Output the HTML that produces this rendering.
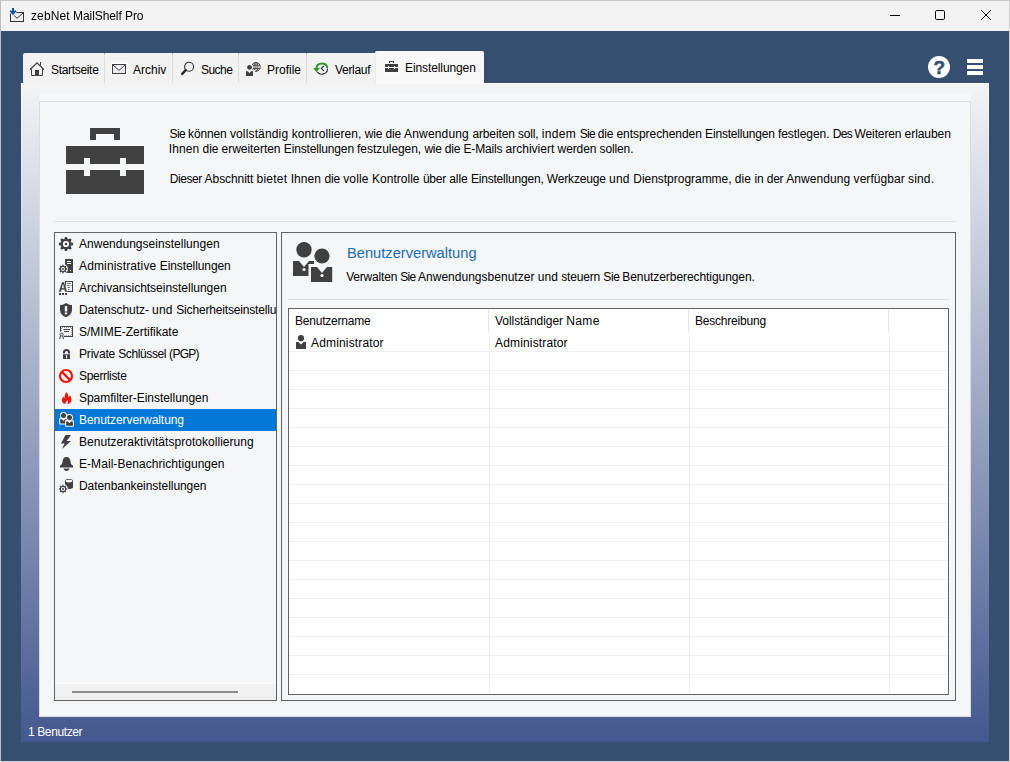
<!DOCTYPE html>
<html lang="de">
<head>
<meta charset="utf-8">
<title>zebNet MailShelf Pro</title>
<style>
html,body{margin:0;padding:0;}
body{width:1010px;height:762px;overflow:hidden;background:#364e70;font-family:"Liberation Sans",sans-serif;font-size:12px;color:#000;position:relative;}
.abs{position:absolute;}
.t{position:absolute;white-space:nowrap;line-height:14px;font-size:12px;}
#win{position:absolute;left:0;top:0;width:1008px;height:760px;border:1px solid #cfcfcf;border-left-color:#bdbdbd;border-top-color:#c4c4c4;background:#364e70;}
#titlebar{position:absolute;left:1px;top:1px;width:1008px;height:30px;background:#f3f3f3;}
#outer{position:absolute;left:21px;top:83px;width:968px;height:659px;background:linear-gradient(to bottom,#f3f4f6 0%,#44588f 100%);}
#outerbl{position:absolute;left:21px;top:83px;width:1px;height:659px;background:linear-gradient(to bottom,#ffffff 0%,#44588f 100%);}
#outerbr{position:absolute;left:988px;top:83px;width:1px;height:659px;background:linear-gradient(to bottom,#ffffff 0%,#44588f 100%);}
#outerbt{position:absolute;left:21px;top:83px;width:968px;height:1px;background:#ffffff;}
#inner{position:absolute;left:39px;top:93px;width:932px;height:624px;background:#f5f6f8;}
#box{position:absolute;left:39px;top:101px;width:930px;height:614px;border:1px solid #dcdcdc;background:#f5f6f8;}
.tab{position:absolute;top:53px;height:31px;background:#f2f2f2;}
.tabsep{position:absolute;top:53px;width:1px;height:30px;background:linear-gradient(to bottom,#8f9aae 0,#8f9aae 1px,#dedede 1px,#dedede 100%);}
#tabact{position:absolute;left:375px;top:51px;width:109px;height:33px;background:#f9f9f9;border-radius:2px 2px 0 0;box-shadow:inset 1px 0 0 #ebebeb;}
.w{position:absolute;top:0;white-space:pre;letter-spacing:-0.06px;}
.hl{position:absolute;height:1px;background:#e2e2e2;}
#list{position:absolute;left:54px;top:232px;width:221px;height:467px;border:1px solid #646464;background:#f5f6f8;overflow:hidden;}
.row{position:absolute;left:0;width:221px;height:22px;}
.row .lbl{position:absolute;left:24px;top:4px;line-height:14px;white-space:nowrap;}
.row svg{position:absolute;left:3px;top:3px;}
.sel{background:#0078d7;color:#fff;}
#detail{position:absolute;left:281px;top:232px;width:673px;height:467px;border:1px solid #646464;background:#f5f6f8;}
#table{position:absolute;left:288px;top:308px;width:659px;height:385px;border:1px solid #646464;background:#fff;overflow:hidden;}
.gl{position:absolute;left:0;width:659px;height:1px;background:#f0f0f0;}
.gv{position:absolute;top:24px;width:1px;height:361px;background:#f0f0f0;}
.hv{position:absolute;top:0;width:1px;height:24px;background:#e5e5e5;}
</style>
</head>
<body>
<div id="win"></div>
<div id="titlebar"></div>
<!-- title icon -->
<svg class="abs" style="left:9px;top:7px" width="17" height="16" viewBox="0 0 17 16">
<rect x="1.5" y="5.5" width="13" height="9" fill="#efeff3" stroke="#333" stroke-width="1"/>
<path d="M3.5 7 L8 11.3 L14.2 5.8" fill="none" stroke="#333" stroke-width="1"/>
<path d="M3 1 H5 V4.2 L6.2 3.1 L7.3 4.3 L4 8.2 L0.7 4.3 L1.8 3.1 L3 4.2 Z" fill="#0054a6" stroke="#f3f3f3" stroke-width="1.6" stroke-linejoin="round"/>
<path d="M3 1 H5 V4.2 L6.2 3.1 L7.3 4.3 L4 8.2 L0.7 4.3 L1.8 3.1 L3 4.2 Z" fill="#0054a6"/>
</svg>
<div class="t" id="ttl" style="left:30.6px;top:9px;will-change:transform;"><span style="letter-spacing:0.106px">zebNet </span><span style="letter-spacing:-0.089px">MailShelf </span><span style="letter-spacing:-0.037px">Pro</span></div>
<!-- window controls -->
<svg class="abs" style="left:880px;top:5px" width="120" height="20" viewBox="0 0 120 20">
<path d="M10 10.5 H20" stroke="#000" stroke-width="1" fill="none"/>
<rect x="55.5" y="5.5" width="9" height="9" rx="1.2" fill="none" stroke="#000" stroke-width="1"/>
<path d="M101 5 L111 15 M111 5 L101 15" stroke="#000" stroke-width="1" fill="none"/>
</svg>

<!-- outer gradient panel -->
<div id="outer"></div><div id="outerbt"></div><div id="outerbl"></div><div id="outerbr"></div>
<!-- tabs -->
<div class="tab" style="left:23px;width:352px;border-radius:2px 0 0 0;"></div>
<div class="tabsep" style="left:104px"></div>
<div class="tabsep" style="left:172px"></div>
<div class="tabsep" style="left:238px"></div>
<div class="tabsep" style="left:306px"></div>
<div id="tabact"></div>

<!-- tab icons -->
<svg class="abs" style="left:29px;top:61px" width="16" height="16" viewBox="0 0 16 16">
<path d="M8 1.2 L0.6 8.4 H2 V15.5 H14 V8.4 H15.4 Z M11 0.6 H12.6 V5 H11 Z" fill="#fff" stroke="#fff" stroke-width="1.6" stroke-linejoin="round"/>
<path d="M2.5 8 V14.5 H13.5 V8 L8 2.6 Z" fill="#f5f5f8"/>
<path d="M1.4 8.3 L8 1.8 L14.6 8.3" fill="none" stroke="#404040" stroke-width="1.3" stroke-linecap="round" stroke-linejoin="miter"/>
<path d="M2.5 8 V14.5 H13.5 V8" fill="none" stroke="#404040" stroke-width="1"/>
<rect x="6" y="9" width="4" height="6" fill="#404040"/>
<rect x="11" y="1" width="1.1" height="3.6" fill="#404040"/>
</svg>
<svg class="abs" style="left:111px;top:62px" width="17" height="13" viewBox="0 0 17 13">
<rect x="0.5" y="1.5" width="15" height="10" fill="#fff" stroke="#fff" stroke-width="2"/>
<rect x="1.5" y="2.5" width="13" height="9" fill="#eeeef2" stroke="#404040" stroke-width="1"/>
<path d="M2 3 L8 8.4 L14 3" fill="none" stroke="#404040" stroke-width="1"/>
</svg>
<svg class="abs" style="left:180px;top:61px" width="16" height="16" viewBox="0 0 16 16">
<circle cx="9.1" cy="5.7" r="4.5" fill="#efeff2" stroke="#2e2e2e" stroke-width="1.1"/>
<path d="M5.7 9.1 L2.2 12.8" stroke="#2a2a2a" stroke-width="2.5" stroke-linecap="round"/>
</svg>
<svg class="abs" style="left:245px;top:61px" width="16" height="16" viewBox="0 0 16 16">
<g fill="none" stroke="#404040" stroke-width="0.9"><circle cx="10.9" cy="5.9" r="4.4"/><ellipse cx="10.9" cy="5.9" rx="2" ry="4.4"/><path d="M10.9 1.5 V10.3 M6.8 4.3 H15 M6.8 7.6 H15"/></g>
<circle cx="4.5" cy="6.3" r="3.5" fill="#f2f2f2"/><path d="M0 9.2 H9.2 V16 H0 Z" fill="#f2f2f2"/>
<path d="M8.6 9.4 L11.6 8.2 L9.4 11.2 Z" fill="#f2f2f2"/>
<circle cx="4.5" cy="6.3" r="2.4" fill="#404040"/>
<path d="M1 10.2 H3 L4.5 12.2 L6 10.2 H8 V15 H1 Z" fill="#404040"/>
</svg>
<svg class="abs" style="left:312px;top:61px" width="17" height="16" viewBox="0 0 17 16">
<circle cx="9.8" cy="7.4" r="6.9" fill="#fff"/>
<path d="M0.4 6.6 H8.6 L4.3 12 Z" fill="#fff"/>
<circle cx="9.8" cy="7.4" r="5.3" fill="#f0f0f3"/>
<path d="M15.6 7.4 A5.8 5.8 0 0 1 5.2 10.9" fill="none" stroke="#333" stroke-width="1.2"/>
<path d="M15.5 7.0 A5.7 5.7 0 0 0 4.3 7.4" fill="none" stroke="#2c982c" stroke-width="2"/>
<path d="M1.1 7.1 H7.9 L4.3 11.3 Z" fill="#2c982c"/>
<path d="M11.6 5.2 L9.3 7.4 L11.6 9.6" fill="none" stroke="#2a2a2a" stroke-width="1.1" stroke-linecap="round" stroke-linejoin="round"/>
</svg>
<svg class="abs" style="left:384px;top:60px" width="16" height="14" viewBox="0 0 16 14">
<path d="M5 0.5 H10.5 V3.5 H14.6 V12.6 H0.4 V3.5 H5 Z" fill="#fff"/>
<path d="M5 1 H10 V3 H9 V2 H6 V3 H5 Z" fill="#404040"/>
<path d="M1 4 H14 V7 H11 V6 H10 V7 H5 V6 H4 V7 H1 Z" fill="#404040"/>
<path d="M1 8 H4 V9 H5 V8 H10 V9 H11 V8 H14 V12 H1 Z" fill="#404040"/>
</svg>
<div class="t" style="left:51px;top:63px;letter-spacing:-0.32px;">Startseite</div>
<div class="t" style="left:133px;top:63px;letter-spacing:0px;">Archiv</div>
<div class="t" style="left:201px;top:63px;letter-spacing:-0.55px;">Suche</div>
<div class="t" style="left:267px;top:63px;letter-spacing:0px;">Profile</div>
<div class="t" style="left:335px;top:63px;letter-spacing:-0.3px;">Verlauf</div>
<div class="t" style="left:405px;top:61px;letter-spacing:-0.1px;">Einstellungen</div>

<!-- help + menu -->
<svg class="abs" style="left:927px;top:55px" width="24" height="24" viewBox="0 0 24 24">
<circle cx="12" cy="12" r="11" fill="#fff"/>
<text x="12.2" y="19.2" text-anchor="middle" style="font-family:'Liberation Sans',sans-serif;font-weight:700;font-size:19px;" fill="#364e70" stroke="#364e70" stroke-width="0.5">?</text>
</svg>
<div class="abs" style="left:967px;top:59px;width:16px;height:4px;background:#fff"></div>
<div class="abs" style="left:967px;top:65px;width:16px;height:4px;background:#fff"></div>
<div class="abs" style="left:967px;top:71px;width:16px;height:4px;background:#fff"></div>

<!-- inner panel -->
<div id="inner"></div>
<div id="box"></div>

<!-- big briefcase -->
<svg class="abs" style="left:66px;top:128px" width="78" height="66" viewBox="0 0 78 66">
<path d="M24 0 H54 V12 H48 V6 H30 V12 H24 Z" fill="#404040"/>
<path d="M0 18 H78 V36 H60 V30 H54 V36 H24 V30 H18 V36 H0 Z" fill="#404040"/>
<path d="M0 42 H18 V48 H24 V42 H54 V48 H60 V42 H78 V66 H0 Z" fill="#404040"/>
</svg>
<div class="t ln" style="left:0;top:127px;width:1010px;height:14px;"><span class="w" style="left:169.50px;letter-spacing:-0.544px">Sie </span><span class="w" style="left:188.00px;letter-spacing:-0.115px">können </span><span class="w" style="left:229.90px;letter-spacing:0.147px">vollständig </span><span class="w" style="left:291.70px;letter-spacing:0.071px">kontrollieren, </span><span class="w" style="left:364.80px;letter-spacing:-0.135px">wie </span><span class="w" style="left:385.60px;letter-spacing:-0.212px">die </span><span class="w" style="left:404.10px;letter-spacing:0.158px">Anwendung </span><span class="w" style="left:472.40px;letter-spacing:-0.122px">arbeiten </span><span class="w" style="left:518.00px;letter-spacing:-0.162px">soll, </span><span class="w" style="left:541.70px;letter-spacing:0.330px">indem </span><span class="w" style="left:579.70px;letter-spacing:-0.669px">Sie </span><span class="w" style="left:597.70px;letter-spacing:-0.137px">die </span><span class="w" style="left:616.50px;letter-spacing:-0.053px">entsprechenden </span><span class="w" style="left:705.10px;letter-spacing:-0.185px">Einstellungen </span><span class="w" style="left:777.90px;letter-spacing:-0.043px">festlegen. </span><span class="w" style="left:832.80px;letter-spacing:-0.718px">Des </span><span class="w" style="left:854.60px;letter-spacing:-0.126px">Weiteren </span><span class="w" style="left:904.60px;letter-spacing:-0.058px">erlauben</span></div>
<div class="t ln" style="left:0;top:142px;width:1010px;height:14px;"><span class="w" style="left:168.80px;letter-spacing:0.073px">Ihnen </span><span class="w" style="left:202.60px;letter-spacing:-0.087px">die </span><span class="w" style="left:221.60px;letter-spacing:-0.041px">erweiterten </span><span class="w" style="left:283.80px;letter-spacing:-0.149px">Einstellungen </span><span class="w" style="left:357.10px;letter-spacing:-0.057px">festzulegen, </span><span class="w" style="left:424.40px;letter-spacing:-0.260px">wie </span><span class="w" style="left:444.70px;letter-spacing:-0.137px">die </span><span class="w" style="left:463.50px;letter-spacing:-0.154px">E-Mails </span><span class="w" style="left:505.60px;letter-spacing:-0.001px">archiviert </span><span class="w" style="left:557.60px;letter-spacing:-0.113px">werden </span><span class="w" style="left:599.50px;letter-spacing:-0.115px">sollen.</span></div>
<div class="t ln" style="left:0;top:172px;width:1010px;height:14px;"><span class="w" style="left:169.80px;letter-spacing:-0.459px">Dieser </span><span class="w" style="left:204.60px;letter-spacing:-0.069px">Abschnitt </span><span class="w" style="left:256.60px;letter-spacing:0.202px">bietet </span><span class="w" style="left:290.70px;letter-spacing:0.056px">Ihnen </span><span class="w" style="left:324.40px;letter-spacing:-0.137px">die </span><span class="w" style="left:343.20px;letter-spacing:0.148px">volle </span><span class="w" style="left:372.10px;letter-spacing:0.010px">Kontrolle </span><span class="w" style="left:422.90px;letter-spacing:-0.210px">über </span><span class="w" style="left:449.20px;letter-spacing:-0.063px">alle </span><span class="w" style="left:470.90px;letter-spacing:-0.195px">Einstellungen, </span><span class="w" style="left:546.70px;letter-spacing:-0.141px">Werkzeuge </span><span class="w" style="left:609.10px;letter-spacing:0.211px">und </span><span class="w" style="left:633.30px;letter-spacing:-0.031px">Dienstprogramme, </span><span class="w" style="left:734.80px;letter-spacing:0.113px">die </span><span class="w" style="left:754.60px;letter-spacing:-0.158px">in </span><span class="w" style="left:766.80px;letter-spacing:-0.294px">der </span><span class="w" style="left:786.30px;letter-spacing:0.058px">Anwendung </span><span class="w" style="left:853.60px;letter-spacing:0.047px">verfügbar </span><span class="w" style="left:908.10px;letter-spacing:0.138px">sind.</span></div>
<div class="hl" style="left:54px;top:221px;width:902px;"></div>

<!-- list -->
<div id="list">
<div class="row" style="top:0px"><svg width="16" height="16" viewBox="0 0 16 16"><path d="M6.69 2.55 L6.87 0.89 L9.13 0.89 L9.31 2.55 L10.93 3.23 L12.23 2.18 L13.82 3.77 L12.77 5.07 L13.45 6.69 L15.11 6.87 L15.11 9.13 L13.45 9.31 L12.77 10.93 L13.82 12.23 L12.23 13.82 L10.93 12.77 L9.31 13.45 L9.13 15.11 L6.87 15.11 L6.69 13.45 L5.07 12.77 L3.77 13.82 L2.18 12.23 L3.23 10.93 L2.55 9.31 L0.89 9.13 L0.89 6.87 L2.55 6.69 L3.23 5.07 L2.18 3.77 L3.77 2.18 L5.07 3.23 Z" fill="#404040"/><circle cx="8" cy="8" r="3.1" fill="#fff"/><circle cx="8" cy="8" r="1.3" fill="#404040"/></svg><span class="lbl" style="letter-spacing:0.02px;">Anwendungseinstellungen</span></div>
<div class="row" style="top:22px"><svg width="16" height="16" viewBox="0 0 16 16"><rect x="7" y="1" width="8" height="14" fill="#404040"/><rect x="9" y="3" width="4" height="1" fill="#fff"/><rect x="9" y="5" width="4" height="1" fill="#fff"/><rect x="12" y="12" width="1" height="1" fill="#fff"/><circle cx="5" cy="11" r="5" fill="#f5f6f8"/><path d="M4.25 7.89 L4.33 6.75 L5.67 6.75 L5.75 7.89 L6.67 8.27 L7.53 7.52 L8.48 8.47 L7.73 9.33 L8.11 10.25 L9.25 10.33 L9.25 11.67 L8.11 11.75 L7.73 12.67 L8.48 13.53 L7.53 14.48 L6.67 13.73 L5.75 14.11 L5.67 15.25 L4.33 15.25 L4.25 14.11 L3.33 13.73 L2.47 14.48 L1.52 13.53 L2.27 12.67 L1.89 11.75 L0.75 11.67 L0.75 10.33 L1.89 10.25 L2.27 9.33 L1.52 8.47 L2.47 7.52 L3.33 8.27 Z" fill="#404040"/><circle cx="5" cy="11" r="1.9" fill="#fff"/><circle cx="5" cy="11" r="0.9" fill="#404040"/></svg><span class="lbl"><span style="letter-spacing:0.141px">Administrative </span><span style="letter-spacing:-0.096px">Einstellungen</span></span></div>
<div class="row" style="top:44px"><svg width="16" height="16" viewBox="0 0 16 16"><rect x="7.5" y="1.5" width="7" height="10" fill="#f5f6f8" stroke="#404040" stroke-width="1"/><path d="M9 3.5 H13 M9 5.5 H11.6 M12.6 5.5 H13.6 M9.5 7.5 H12 M10 9.5 H11.6" stroke="#5a5a5a" stroke-width="0.8" fill="none"/><path d="M0.6 12 L3.9 2 H6.1 L9.4 12 H7 L6.4 9.8 H3.6 L3 12 Z M4.1 8 H5.9 L5 4.6 Z" fill="#404040" stroke="#f5f6f8" stroke-width="0.4" fill-rule="evenodd"/><path d="M1 13 h2 v2 h-2 z M4 13 h2 v2 h-2 z M7 13 h2 v2 h-2 z" fill="#404040"/></svg><span class="lbl" style="letter-spacing:-0.02px;">Archivansichtseinstellungen</span></div>
<div class="row" style="top:66px"><svg width="16" height="16" viewBox="0 0 16 16"><path d="M8 0.9 C6.3 2.2 4.3 2.9 2 3 V7.4 C2 11.2 4.6 13.9 8 15.1 C11.4 13.9 14 11.2 14 7.4 V3 C11.7 2.9 9.7 2.2 8 0.9 Z" fill="#404040"/><rect x="6.8" y="4.1" width="2.4" height="5.4" fill="#fff"/><rect x="6.8" y="10.4" width="2.4" height="2" fill="#fff"/></svg><span class="lbl"><span style="letter-spacing:-0.072px">Datenschutz- </span><span style="letter-spacing:0.186px">und </span><span style="letter-spacing:-0.169px">Sicherheitseinstellungen</span></span></div>
<div class="row" style="top:88px"><svg width="16" height="16" viewBox="0 0 16 16"><rect x="2" y="2" width="13" height="11" fill="#404040"/><rect x="3.5" y="3.5" width="10" height="8" fill="#f5f6f8"/><path d="M3 3.5 H14 M3 11.5 H14" stroke="#f5f6f8" stroke-width="1" stroke-dasharray="1 1" fill="none"/><path d="M3.5 3 V12 M13.5 3 V12" stroke="#f5f6f8" stroke-width="1" stroke-dasharray="1 1" fill="none"/><path d="M5.5 5.5 H12 M6 7.5 H11" stroke="#404040" stroke-width="1" fill="none"/><circle cx="3.6" cy="10.6" r="3" fill="#f5f6f8"/><circle cx="3.6" cy="10.4" r="2" fill="#6e6e6e"/><circle cx="3.6" cy="10.4" r="0.9" fill="#e0e0e0"/><path d="M2.6 12 L1.6 15 M4.6 12 L5.6 15" stroke="#555" stroke-width="1.1" fill="none"/></svg><span class="lbl" style="letter-spacing:0px;">S/MIME-Zertifikate</span></div>
<div class="row" style="top:110px"><svg width="16" height="16" viewBox="0 0 16 16"><path d="M6 7.5 V6.6 A2.5 2.6 0 0 1 11 6.6 V7.5" stroke="#404040" stroke-width="2" fill="none"/><rect x="5" y="8.3" width="7" height="4.7" fill="#404040"/><rect x="8" y="9.2" width="1.1" height="3" fill="#fff"/></svg><span class="lbl"><span style="letter-spacing:-0.185px">Private </span><span style="letter-spacing:-0.379px">Schlüssel </span><span style="letter-spacing:-0.708px">(PGP)</span></span></div>
<div class="row" style="top:132px"><svg width="16" height="16" viewBox="0 0 16 16"><circle cx="8" cy="8" r="6" fill="none" stroke="#e8190a" stroke-width="2.2"/><path d="M3.9 3.9 L12.1 12.1" stroke="#e8190a" stroke-width="2.2"/></svg><span class="lbl" style="letter-spacing:-0.32px;">Sperrliste</span></div>
<div class="row" style="top:154px"><svg width="16" height="16" viewBox="0 0 16 16"><path d="M8.3 1.9 C9.9 3.6 10.5 5.4 10.2 7.3 C11 6.9 11.7 6.2 12 5.3 C13.5 7.4 13.9 10 12.9 12 C12.1 13.4 10.7 14.1 9.2 14.1 C10.4 12.8 10.4 11.2 9.4 10 C9 11.4 8.2 12 7.6 12.6 C7.2 13.1 7.2 13.7 7.5 14.1 C5.6 14 4.3 12.8 4 11 C3.8 9.4 4.5 7.8 5.2 6.3 C5.6 7.2 6 7.8 6.6 8.2 C6.4 6 7 3.8 8.3 1.9 Z" fill="#e8190a"/></svg><span class="lbl" style="letter-spacing:-0.03px;">Spamfilter-Einstellungen</span></div>
<div class="row sel" style="top:176px"><svg width="17" height="16" viewBox="0 0 17 16"><g fill="#fff" stroke="#fff" stroke-width="2" stroke-linejoin="miter"><circle cx="5.5" cy="3.5" r="2.5"/><path d="M2.2 7.3 H8.7 V8 H7 V11.6 H2.2 Z"/><circle cx="11.5" cy="5.6" r="2.5"/><rect x="8.2" y="9.4" width="6.7" height="4.3"/></g><circle cx="5.5" cy="3.5" r="2.5" fill="#404040"/><path d="M2.2 7.3 H4 L5.5 9 L7 7.3 H8.7 V8.2 H7.2 V11.6 H2.2 Z" fill="#404040"/><circle cx="11.5" cy="5.6" r="2.5" fill="#404040"/><path d="M8.2 9.4 H10 L11.5 11.2 L13 9.4 H14.9 V13.7 H8.2 Z" fill="#404040"/></svg><span class="lbl" style="letter-spacing:-0.06px;">Benutzerverwaltung</span></div>
<div class="row" style="top:198px"><svg width="16" height="16" viewBox="0 0 16 16"><path d="M7.5 1 H13 L8.6 7 H13 L4 15 L6.6 9.5 H3 Z" fill="#404040"/></svg><span class="lbl" style="letter-spacing:0.04px;">Benutzeraktivitätsprotokollierung</span></div>
<div class="row" style="top:220px"><svg width="16" height="16" viewBox="0 0 16 16"><path d="M8.5 1 C11 1 12.3 3 12.5 5.5 C12.7 8 13.5 9 15 9.6 V11.5 H2 V9.6 C3.5 9 4.3 8 4.5 5.5 C4.7 3 6 1 8.5 1 Z" fill="#404040"/><path d="M5.5 12.6 H11.5 C11.3 14.2 10 15 8.5 15 C7 15 5.7 14.2 5.5 12.6 Z" fill="#404040"/></svg><span class="lbl" style="letter-spacing:0.06px;">E-Mail-Benachrichtigungen</span></div>
<div class="row" style="top:242px"><svg width="16" height="16" viewBox="0 0 16 16"><path d="M7 2.6 C7 0.5 15 0.5 15 2.6 V9.5 C15 11.4 7 11.4 7 9.5 Z" fill="#404040"/><ellipse cx="11" cy="3.1" rx="3.3" ry="1.35" fill="#fff"/><circle cx="5" cy="11" r="4.9" fill="#f5f6f8"/><path d="M4.28 7.99 L4.43 6.74 L5.57 6.74 L5.72 7.99 L6.62 8.36 L7.61 7.58 L8.42 8.39 L7.64 9.38 L8.01 10.28 L9.26 10.43 L9.26 11.57 L8.01 11.72 L7.64 12.62 L8.42 13.61 L7.61 14.42 L6.62 13.64 L5.72 14.01 L5.57 15.26 L4.43 15.26 L4.28 14.01 L3.38 13.64 L2.39 14.42 L1.58 13.61 L2.36 12.62 L1.99 11.72 L0.74 11.57 L0.74 10.43 L1.99 10.28 L2.36 9.38 L1.58 8.39 L2.39 7.58 L3.38 8.36 Z" fill="#404040"/><circle cx="5" cy="11" r="2.1" fill="#fff"/><circle cx="5" cy="11" r="1" fill="#404040"/></svg><span class="lbl" style="letter-spacing:-0.06px;">Datenbankeinstellungen</span></div>
<div class="abs" style="left:0;top:450px;width:221px;height:17px;background:#f0f0f0;border-top:1px solid #fbfbfb"></div>
<div class="abs" style="left:17px;top:458px;width:166px;height:2px;background:#8c8c8c"></div>
</div>

<!-- detail -->
<div id="detail"></div>
<svg class="abs" style="left:288px;top:240px" width="48" height="44" viewBox="0 0 48 44">
<circle cx="16" cy="9.8" r="7.7" fill="#404040"/>
<path d="M5 21 H11 L16 27 L21 21 H26 V24 H20.5 V36 H5 Z" fill="#404040"/>
<circle cx="16" cy="29.5" r="1.6" fill="#f5f6f8"/>
<circle cx="34" cy="16" r="7.6" fill="#404040"/>
<path d="M23 27 H29 L34 33 L39 27 H44.2 V42 H23 Z" fill="#404040"/>
<circle cx="34" cy="35.5" r="1.6" fill="#f5f6f8"/>
</svg>
<div class="t" style="left:347px;top:244px;font-size:14.67px;line-height:18px;color:#1a6cb5;">Benutzerverwaltung</div>
<div class="t ln" style="left:0;top:270px;width:1010px;height:14px;"><span class="w" style="left:346.20px;letter-spacing:-0.193px">Verwalten </span><span class="w" style="left:400.30px;letter-spacing:-0.744px">Sie </span><span class="w" style="left:418.00px;letter-spacing:0.020px">Anwendungsbenutzer </span><span class="w" style="left:537.80px;letter-spacing:0.011px">und </span><span class="w" style="left:561.20px;letter-spacing:-0.157px">steuern </span><span class="w" style="left:603.30px;letter-spacing:-0.419px">Sie </span><span class="w" style="left:622.30px;letter-spacing:-0.068px">Benutzerberechtigungen.</span></div>
<div class="hl" style="left:288px;top:299px;width:661px;"></div>
<div id="table">
<div class="gl" style="top:42px"></div><div class="gl" style="top:61px"></div><div class="gl" style="top:80px"></div><div class="gl" style="top:99px"></div><div class="gl" style="top:118px"></div><div class="gl" style="top:137px"></div><div class="gl" style="top:156px"></div><div class="gl" style="top:175px"></div><div class="gl" style="top:194px"></div><div class="gl" style="top:213px"></div><div class="gl" style="top:232px"></div><div class="gl" style="top:251px"></div><div class="gl" style="top:270px"></div><div class="gl" style="top:289px"></div><div class="gl" style="top:308px"></div><div class="gl" style="top:327px"></div><div class="gl" style="top:346px"></div><div class="gl" style="top:365px"></div>
<div class="hv" style="left:199px"></div><div class="hv" style="left:399px"></div><div class="hv" style="left:599px"></div>
<div class="gv" style="left:200px"></div><div class="gv" style="left:400px"></div><div class="gv" style="left:600px"></div>
<div class="t" style="left:6px;top:5px;letter-spacing:-0.21px;">Benutzername</div>
<div class="t" style="left:206px;top:5px;"><span style="letter-spacing:-0.053px">Vollständiger </span><span style="letter-spacing:0.330px">Name</span></div>
<div class="t" style="left:406px;top:5px;letter-spacing:-0.21px;">Beschreibung</div>
<svg class="abs" style="left:7px;top:26px" width="11" height="15" viewBox="0 0 11 15"><circle cx="5" cy="3.2" r="3.1" fill="#404040"/><path d="M0 7 H2.4 L5 9.6 L7.6 7 H10 V14 H0 Z" fill="#404040"/></svg>
<div class="t" style="left:22px;top:27px;letter-spacing:0.16px;">Administrator</div>
<div class="t" style="left:206px;top:27px;letter-spacing:0.16px;">Administrator</div>
</div>

<div class="t" style="left:28px;top:725px;color:#fff;letter-spacing:-0.38px;">1 Benutzer</div>
</body>
</html>
